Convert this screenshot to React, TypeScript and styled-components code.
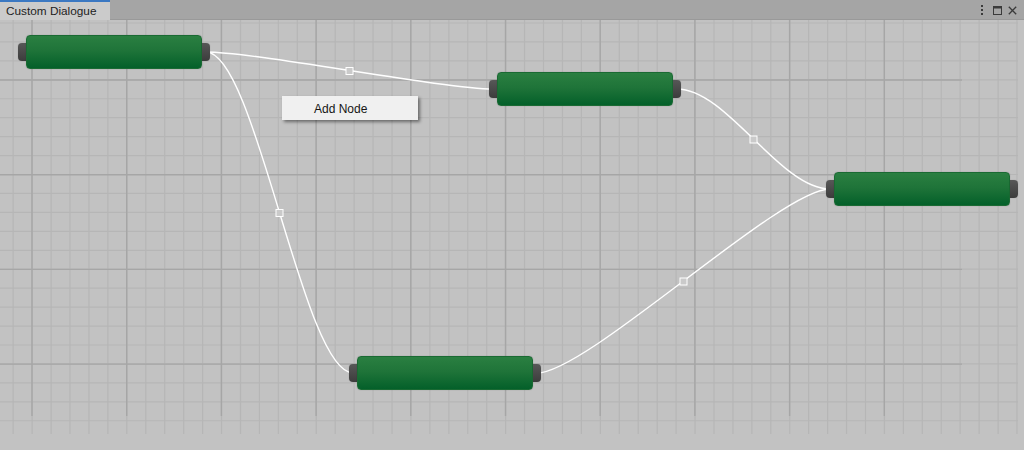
import React from "react";
import styled, { createGlobalStyle } from "styled-components";

const Global = createGlobalStyle`
  html, body { margin: 0; padding: 0; background: #c2c2c2; overflow: hidden; }
  #root { width: 1024px; height: 450px; }
`;

const CANVAS_TOP = 20;

const Window = styled.div`
  width: 1024px;
  height: 450px;
  display: flex;
  flex-direction: column;
  font-family: "Liberation Sans", Arial, sans-serif;
`;

const TabBar = styled.div`
  height: 20px;
  flex: 0 0 20px;
  background: #a5a5a5;
  display: flex;
  align-items: stretch;
  justify-content: space-between;
  box-shadow: inset 0 -1px 0 #999999;
`;

const Tab = styled.div`
  width: 110px;
  box-sizing: border-box;
  background: #cbcbcb;
  border-top: 2px solid #3b78c2;
  padding: 0 0 0 6px;
  display: flex;
  align-items: center;
  font-size: 11.8px;
  color: #1e1e1e;
`;

const WinButtons = styled.div`
  display: flex;
  align-items: center;
  gap: 6px;
  padding-right: 7px;
`;

const IconSvg = styled.svg<{ $gapLeft?: number }>`
  display: block;
  margin-left: ${(p) => p.$gapLeft ?? 0}px;
`;

const Canvas = styled.div`
  position: relative;
  flex: 1;
  background: #c2c2c2;
  overflow: hidden;
`;

const Layer = styled.svg`
  position: absolute;
  left: 0;
  top: 0;
`;

const NodeWrap = styled.div.attrs<{ $x: number; $y: number }>((p) => ({
  style: { left: `${p.$x - 8}px`, top: `${p.$y - CANVAS_TOP}px` },
}))<{ $x: number; $y: number }>`
  position: absolute;
  display: flex;
  align-items: center;
  height: 34px;
`;

const Port = styled.div<{ $side: "left" | "right" }>`
  width: 8px;
  height: 18px;
  background: linear-gradient(#575757, #3c3c3c);
  border-radius: ${(p) => (p.$side === "left" ? "4px 0 0 4px" : "0 4px 4px 0")};
  box-shadow: 0 0 1px rgba(0, 0, 0, 0.3);
`;

const NodeBody = styled.div`
  width: 176px;
  height: 34px;
  box-sizing: border-box;
  border-radius: 4px;
  background: linear-gradient(#2a7f41 0%, #1f7439 45%, #04602a 100%);
  border: 1px solid #1a6a33;
  box-shadow: 0 0 1px rgba(0, 0, 0, 0.35);
`;

const Menu = styled.div`
  position: absolute;
  left: 282px;
  top: ${96 - CANVAS_TOP}px;
  width: 136px;
  height: 24px;
  box-sizing: border-box;
  padding-top: 2px;
  background: #f0f0f0;
  box-shadow: 2px 2px 3px rgba(0, 0, 0, 0.45);
  display: flex;
  align-items: center;
`;

const MenuItem = styled.div`
  padding-left: 32px;
  font-size: 12px;
  color: #151515;
`;

type Node = { id: string; x: number; y: number };
const nodes: Node[] = [
  { id: "a", x: 26, y: 35 },
  { id: "b", x: 497, y: 72 },
  { id: "c", x: 357, y: 356 },
  { id: "d", x: 834, y: 172 },
];

const outPt = (n: Node) => ({ x: n.x + 176 + 4, y: n.y + 17 });
const inPt = (n: Node) => ({ x: n.x - 4, y: n.y + 17 });

const links: [string, string][] = [
  ["a", "b"],
  ["a", "c"],
  ["b", "d"],
  ["c", "d"],
];

const byId = (id: string) => nodes.find((n) => n.id === id)!;

const minorV: number[] = [];
for (let k = 0; k < 54; k++) minorV.push(13.2 + k * 18.94);
const minorH: number[] = [];
for (let k = 0; k < 22; k++) minorH.push(23 + k * 18.94);
const majorV: number[] = [];
for (let k = 0; k < 10; k++) majorV.push(32 + k * 94.7);
const majorH: number[] = [];
for (let k = 0; k < 4; k++) majorH.push(80 + k * 94.7);

const Grid: React.FC = () => (
  <g>
    {minorV.map((x) => (
      <line key={"mv" + x} x1={x} y1={20} x2={x} y2={434} stroke="#b6b6b6" strokeWidth={1.2} />
    ))}
    {minorH.map((y) => (
      <line key={"mh" + y} x1={0} y1={y} x2={1018} y2={y} stroke="#b6b6b6" strokeWidth={1.2} />
    ))}
    {majorV.map((x) => (
      <line key={"jv" + x} x1={x} y1={20} x2={x} y2={416} stroke="#a6a6a6" strokeWidth={1.4} />
    ))}
    {majorH.map((y) => (
      <line key={"jh" + y} x1={0} y1={y} x2={962} y2={y} stroke="#a6a6a6" strokeWidth={1.4} />
    ))}
  </g>
);

const Links: React.FC = () => (
  <g>
    {links.map(([f, t]) => {
      const a = outPt(byId(f));
      const b = inPt(byId(t));
      const d = `M${a.x} ${a.y} C${a.x + 50} ${a.y} ${b.x - 50} ${b.y} ${b.x} ${b.y}`;
      const mx = (a.x + b.x) / 2;
      const my = (a.y + b.y) / 2 + 0.5;
      return (
        <g key={f + t}>
          <path d={d} fill="none" stroke="#ffffff" strokeWidth={1.4} />
          <rect x={mx - 3.5} y={my - 3.5} width={7} height={7} fill="#cacaca" stroke="#ffffff" strokeWidth={1} />
        </g>
      );
    })}
  </g>
);

export default function App() {
  return (
    <Window>
      <Global />
      <TabBar>
        <Tab>Custom Dialogue</Tab>
        <WinButtons>
          <IconSvg width="4" height="10" viewBox="0 0 4 10">
            <rect x="1" y="0" width="2" height="2" fill="#3a3a3a" />
            <rect x="1" y="4" width="2" height="2" fill="#3a3a3a" />
            <rect x="1" y="8" width="2" height="2" fill="#3a3a3a" />
          </IconSvg>
          <IconSvg width="9" height="9" viewBox="0 0 9 9" $gapLeft={3}>
            <rect x="0.5" y="0.5" width="8" height="8" fill="none" stroke="#3a3a3a" strokeWidth="1" />
            <rect x="0.5" y="0.5" width="8" height="2" fill="#3a3a3a" />
          </IconSvg>
          <IconSvg width="9" height="9" viewBox="0 0 9 9">
            <path d="M0.8 0.8 L8.2 8.2 M8.2 0.8 L0.8 8.2" stroke="#3a3a3a" strokeWidth="1.3" />
          </IconSvg>
        </WinButtons>
      </TabBar>
      <Canvas>
        <Layer width="1024" height="430" viewBox="0 20 1024 430">
          <Grid />
          <Links />
        </Layer>
        {nodes.map((n) => (
          <NodeWrap key={n.id} $x={n.x} $y={n.y}>
            <Port $side="left" />
            <NodeBody />
            <Port $side="right" />
          </NodeWrap>
        ))}
        <Menu>
          <MenuItem>Add Node</MenuItem>
        </Menu>
      </Canvas>
    </Window>
  );
}
